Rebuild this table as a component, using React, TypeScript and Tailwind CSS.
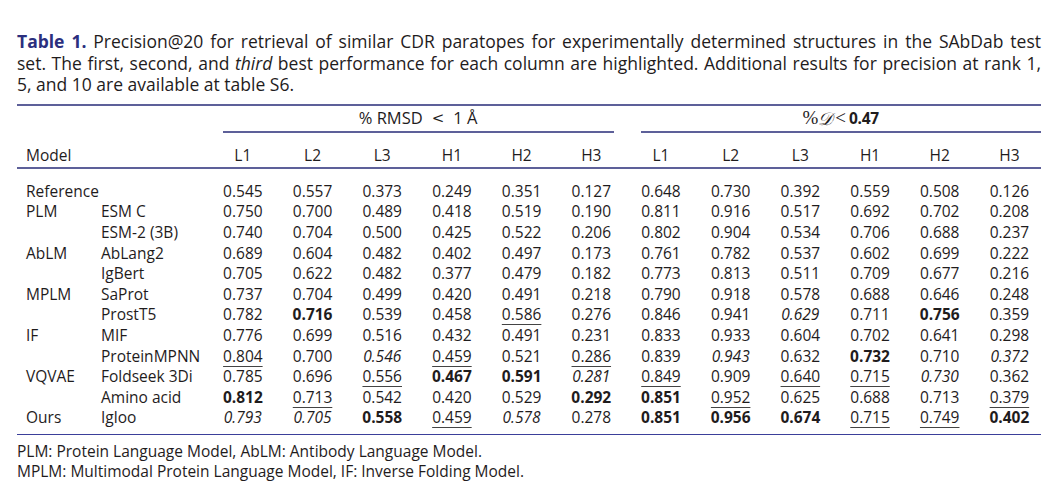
import React from "react";

type Row = {
    cat: string;
    model: string;
    vals: string[];
};

// b: = best (bold), u: = second (underline), i: = third (italic)
const rows: Row[] = [
    { cat: "Reference", model: "", vals: ["0.545", "0.557", "0.373", "0.249", "0.351", "0.127", "0.648", "0.730", "0.392", "0.559", "0.508", "0.126"] },
    { cat: "PLM", model: "ESM C", vals: ["0.750", "0.700", "0.489", "0.418", "0.519", "0.190", "0.811", "0.916", "0.517", "0.692", "0.702", "0.208"] },
    { cat: "", model: "ESM-2 (3B)", vals: ["0.740", "0.704", "0.500", "0.425", "0.522", "0.206", "0.802", "0.904", "0.534", "0.706", "0.688", "0.237"] },
    { cat: "AbLM", model: "AbLang2", vals: ["0.689", "0.604", "0.482", "0.402", "0.497", "0.173", "0.761", "0.782", "0.537", "0.602", "0.699", "0.222"] },
    { cat: "", model: "IgBert", vals: ["0.705", "0.622", "0.482", "0.377", "0.479", "0.182", "0.773", "0.813", "0.511", "0.709", "0.677", "0.216"] },
    { cat: "MPLM", model: "SaProt", vals: ["0.737", "0.704", "0.499", "0.420", "0.491", "0.218", "0.790", "0.918", "0.578", "0.688", "0.646", "0.248"] },
    { cat: "", model: "ProstT5", vals: ["0.782", "b:0.716", "0.539", "0.458", "u:0.586", "0.276", "0.846", "0.941", "i:0.629", "0.711", "b:0.756", "0.359"] },
    { cat: "IF", model: "MIF", vals: ["0.776", "0.699", "0.516", "0.432", "0.491", "0.231", "0.833", "0.933", "0.604", "0.702", "0.641", "0.298"] },
    { cat: "", model: "ProteinMPNN", vals: ["u:0.804", "0.700", "i:0.546", "u:0.459", "0.521", "u:0.286", "0.839", "i:0.943", "0.632", "b:0.732", "0.710", "i:0.372"] },
    { cat: "VQVAE", model: "Foldseek 3Di", vals: ["0.785", "0.696", "u:0.556", "b:0.467", "b:0.591", "i:0.281", "u:0.849", "0.909", "u:0.640", "u:0.715", "i:0.730", "0.362"] },
    { cat: "", model: "Amino acid", vals: ["b:0.812", "u:0.713", "0.542", "0.420", "0.529", "b:0.292", "b:0.851", "u:0.952", "0.625", "0.688", "0.713", "u:0.379"] },
    { cat: "Ours", model: "Igloo", vals: ["i:0.793", "i:0.705", "b:0.558", "u:0.459", "i:0.578", "0.278", "b:0.851", "b:0.956", "b:0.674", "u:0.715", "u:0.749", "b:0.402"] }
];

const headers = ["L1", "L2", "L3", "H1", "H2", "H3", "L1", "L2", "L3", "H1", "H2", "H3"];

const grid = "grid grid-cols-[84px_107px_repeat(12,69.7px)]";

const Cell = ({ value }: { value: string }) => {
    const [kind, num] = value.includes(":") ? value.split(":") : ["", value];
    let cls = "";
    if (kind === "b") cls = "font-bold";
    if (kind === "i") cls = "italic";
    if (kind === "u") cls = "underline decoration-1 underline-offset-[4px] decoration-[#444]";
    return (
        <div className="text-center">
            <span className={cls}>{num}</span>
        </div>
    );
};

export default function App() {
    return (
        <div className="bg-white w-[1059px] h-[489px] overflow-hidden font-['Open_Sans',sans-serif] text-[#1f1c1d] text-[15.5px]">
            <div className="ml-[17px] w-[1024px] pt-[31px]">
                <div className="text-[17.5px] leading-[21.7px]">
                    <div className="text-justify [text-align-last:justify]">
                        <span className="font-bold text-[#2b2f7e]">Table 1.</span> Precision@20 for retrieval of similar CDR paratopes for experimentally determined structures in the SAbDab test
                    </div>
                    <div className="text-justify [text-align-last:justify]">
                        set. The first, second, and <i>third</i> best performance for each column are highlighted. Additional results for precision at rank 1,
                    </div>
                    <div>5, and 10 are available at table S6.</div>
                </div>

                <div className="mt-[8px] h-[2px] bg-[#5d6099]" />

                <div className={grid}>
                    <div className="col-span-2" />
                    <div className="col-span-6 ml-[14.5px] mr-[12.5px] border-b-2 border-[#5d6099] h-[27px] flex items-center justify-center text-[16.5px]">
                        <span>% RMSD</span>
                        <span className="mx-[9px] font-['DejaVu_Serif',serif] text-[15px]">&lt;</span>
                        <span>1 Å</span>
                    </div>
                    <div className="col-span-6 ml-[14.5px] mr-[3.5px] border-b-2 border-[#5d6099] h-[27px] flex items-center justify-center">
                        <span className="font-['Liberation_Serif',serif] text-[19px]">%</span>
                        <span className="font-['DejaVu_Serif',serif] italic text-[18px]">𝒟</span>
                        <span className="font-['Liberation_Serif',serif] text-[19px] mx-[3px]">&lt;</span>
                        <span className="font-bold text-[15.5px] tracking-[-0.3px]">0.47</span>
                    </div>
                </div>

                <div className={`${grid} h-[34px] items-end pb-[2px] leading-[20px]`}>
                    <div className="pl-[9px]">Model</div>
                    <div />
                    {headers.map((h, i) => (
                        <div key={i} className="text-center">{h}</div>
                    ))}
                </div>

                <div className="h-[2px] bg-[#5d6099]" />

                <div className="pt-[11.7px] pb-[6px]">
                    {rows.map((row, index) => (
                        <div key={index} className={`${grid} h-[20.6px] items-center leading-[20.6px]`}>
                            <div className="pl-[9px] whitespace-nowrap">{row.cat}</div>
                            <div className="whitespace-nowrap">{row.model}</div>
                            {row.vals.map((v, j) => (
                                <Cell key={j} value={v} />
                            ))}
                        </div>
                    ))}
                </div>

                <div className="h-[1px] bg-[#3b3f9a]" />

                <div className="mt-[6.5px] leading-[20px]">
                    <div>PLM: Protein Language Model, AbLM: Antibody Language Model.</div>
                    <div>MPLM: Multimodal Protein Language Model, IF: Inverse Folding Model.</div>
                </div>
            </div>
        </div>
    );
}
